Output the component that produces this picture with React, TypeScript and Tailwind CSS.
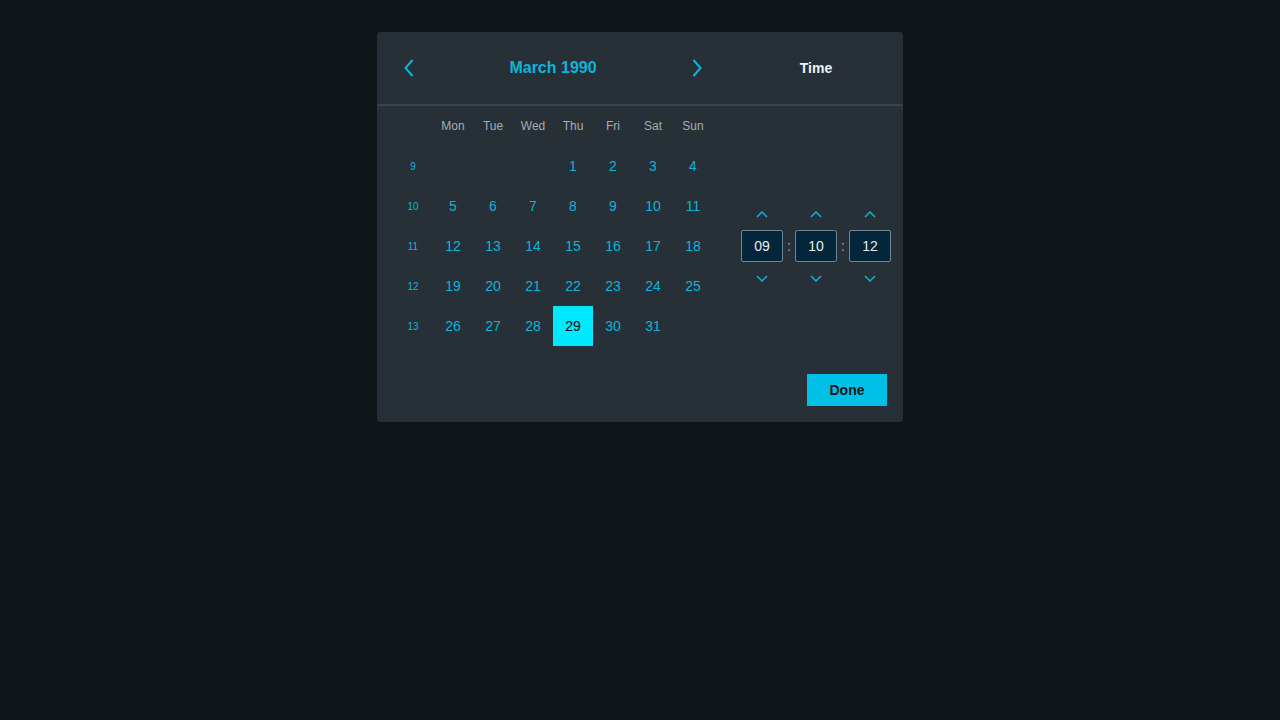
import React from 'react';

const weekdays = ['Mon', 'Tue', 'Wed', 'Thu', 'Fri', 'Sat', 'Sun'];

const weeks: { num: number; days: (number | null)[] }[] = [
  { num: 9, days: [null, null, null, 1, 2, 3, 4] },
  { num: 10, days: [5, 6, 7, 8, 9, 10, 11] },
  { num: 11, days: [12, 13, 14, 15, 16, 17, 18] },
  { num: 12, days: [19, 20, 21, 22, 23, 24, 25] },
  { num: 13, days: [26, 27, 28, 29, 30, 31, null] },
];

function Chevron({ dir }: { dir: 'left' | 'right' }) {
  return (
    <svg width="10" height="18" viewBox="0 0 10 18" fill="none">
      <path
        d={dir === 'left' ? 'M8.5 1 L1.5 9 L8.5 17' : 'M1.5 1 L8.5 9 L1.5 17'}
        stroke="#0cb4dc"
        strokeWidth="2"
      />
    </svg>
  );
}

function SmallChevron({ up }: { up?: boolean }) {
  return (
    <svg width="12" height="7" viewBox="0 0 12 7" fill="none">
      <path d={up ? 'M1 6 L6 1 L11 6' : 'M1 1 L6 6 L11 1'} stroke="#0cb4dc" strokeWidth="1.5" />
    </svg>
  );
}

function Spinner({ value }: { value: string }) {
  return (
    <div className="flex flex-col items-center">
      <button className="h-8 w-[42px] flex items-center justify-center">
        <SmallChevron up />
      </button>
      <div className="w-[42px] h-8 flex items-center justify-center bg-[#03263a] border border-[#6b8797] rounded-[2px] text-sm text-[#e6edf0]">
        {value}
      </div>
      <button className="h-8 w-[42px] flex items-center justify-center">
        <SmallChevron />
      </button>
    </div>
  );
}

export default function App() {
  return (
    <div
      className="min-h-screen w-full bg-[#0e1619] flex justify-center pt-8"
      style={{ fontFamily: '"Liberation Sans", Arial, sans-serif' }}
    >
      <div className="w-[526px] h-[390px] bg-[#283037] rounded flex flex-col">
        {/* Header */}
        <div className="h-[74px] flex items-center border-b-2 border-[#3a4349]">
          <div className="w-[320px] ml-4 flex items-center justify-between">
            <button className="w-8 h-8 flex items-center justify-center">
              <Chevron dir="left" />
            </button>
            <span className="text-base font-bold text-[#0cb4dc]">March 1990</span>
            <button className="w-8 h-8 flex items-center justify-center">
              <Chevron dir="right" />
            </button>
          </div>
          <div className="flex-1 ml-4 text-center text-sm font-bold text-[#eef2f4]">Time</div>
        </div>

        {/* Body */}
        <div className="flex">
          <div className="ml-4 w-[320px]">
            <div className="grid grid-cols-8 h-10 items-center text-xs text-[#a3acb2]">
              <div />
              {weekdays.map((d) => (
                <div key={d} className="text-center">
                  {d}
                </div>
              ))}
            </div>
            {weeks.map((w) => (
              <div key={w.num} className="grid grid-cols-8 h-10">
                <div className="flex items-center justify-center text-[10px] text-[#0cb4dc]">{w.num}</div>
                {w.days.map((d, i) => (
                  <div
                    key={i}
                    className={`flex items-center justify-center text-sm ${
                      d === 29 ? 'bg-[#00e8ff] text-black' : 'text-[#0cb4dc]'
                    }`}
                  >
                    {d ?? ''}
                  </div>
                ))}
              </div>
            ))}
          </div>
          <div className="flex-1 ml-4 pt-10 flex items-center justify-center">
            <div className="flex items-center gap-[3px]">
              <Spinner value="09" />
              <span className="text-sm text-[#a3acb2] w-[6px] text-center">:</span>
              <Spinner value="10" />
              <span className="text-sm text-[#a3acb2] w-[6px] text-center">:</span>
              <Spinner value="12" />
            </div>
          </div>
        </div>

        {/* Footer */}
        <div className="flex justify-end px-4 pt-7">
          <button className="w-20 h-8 bg-[#00bfe6] text-sm font-bold text-[#10181c]">Done</button>
        </div>
      </div>
    </div>
  );
}
